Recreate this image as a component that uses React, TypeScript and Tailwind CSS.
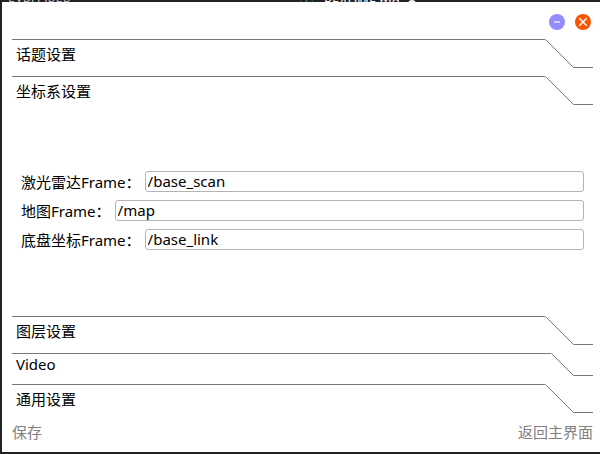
import { useState } from 'react';

type Frame = {
  id: string;
  label: string;
  value: string;
};

const initialFrames: Frame[] = [
  { id: 'laser', label: '激光雷达Frame', value: '/base_scan' },
  { id: 'map', label: '地图Frame', value: '/map' },
  { id: 'base', label: '底盘坐标Frame', value: '/base_link' },
];

function Section({ title, compact = false }: { title: string; compact?: boolean }) {
  return (
    <button type="button" className={compact ? 'flex h-[23px] w-full text-left' : 'flex h-[29px] w-full text-left'}>
      <span
        className={
          compact
            ? 'flex h-full flex-1 items-center border-t border-[#787878] pb-0.5 pl-1'
            : 'flex h-full flex-1 items-center border-t border-[#787878] pl-1'
        }
      >
        {title}
      </span>
      {compact ? (
        <svg width="42" height="23" fill="none" stroke="#787878" aria-hidden="true">
          <path d="M0.5 0.5L22.5 22.5H42" />
        </svg>
      ) : (
        <svg width="48" height="29" fill="none" stroke="#787878" aria-hidden="true">
          <path d="M0.5 0.5L28.5 28.5H48" />
        </svg>
      )}
    </button>
  );
}

export default function App() {
  const [frames, setFrames] = useState(initialFrames);

  const update = (id: string, value: string) => {
    setFrames(frames.map((f) => (f.id === id ? { ...f, value } : f)));
  };

  return (
    <div className="min-h-screen bg-[#222124] pl-0.5 font-['Noto_Sans','Noto_Sans_CJK_SC',sans-serif] text-[15px] leading-5 text-black">
      {/* edge of the editor behind the dialog */}
      <div className="flex h-0.5 overflow-hidden pl-1.5 text-[13px] leading-[2px] text-[#bbbbbb]" aria-hidden="true">
        <span className="w-[292px]">EXPLORER</span>
        <span className="w-6 text-[#519aba]">ⓘ</span>
        <span className="text-white">README.md</span>
        <span className="ml-2 h-2 w-2 rounded-full bg-white" />
      </div>
      <main className="bg-white pr-[7px] pl-2.5">
        <header className="flex h-[37px] justify-end gap-2.5 pt-3 pr-0.5">
          <button type="button" aria-label="最小化" className="h-4 w-4">
            <svg width="16" height="16" viewBox="0 0 16 16">
              <circle cx="8" cy="8" r="8" fill="#938cff" />
              <path d="M5 8H11" stroke="#d3d0ff" strokeWidth="2" />
            </svg>
          </button>
          <button type="button" aria-label="关闭" className="h-4 w-4">
            <svg width="16" height="16" viewBox="0 0 16 16">
              <circle cx="8" cy="8" r="8" fill="#f95400" />
              <path d="M4.3 4.3L11.7 11.7M11.7 4.3L4.3 11.7" stroke="#fff" strokeWidth="1.6" />
            </svg>
          </button>
        </header>

        <div className="flex flex-col gap-2">
          <Section title="话题设置" />
          <Section title="坐标系设置" />
          <div className="flex flex-col gap-2 py-[58px] pr-[9px] pl-[9px]">
            {frames.map((f) => (
              <div key={f.id} className="flex h-[21px] items-center gap-1">
                <label htmlFor={f.id} className="shrink-0">
                  {f.label}：
                </label>
                <input
                  id={f.id}
                  value={f.value}
                  onChange={(e) => update(f.id, e.target.value)}
                  className="h-full min-w-0 flex-1 rounded-[3px] border border-[#b4b4b4] bg-white px-0.5 pb-0.5 outline-none"
                />
              </div>
            ))}
          </div>
          <Section title="图层设置" />
          <Section title="Video" compact />
          <Section title="通用设置" />
        </div>

        <footer className="flex h-[39px] items-center justify-between pb-0.5 text-[#808080]">
          <button type="button">保存</button>
          <button type="button">返回主界面</button>
        </footer>
      </main>
    </div>
  );
}
